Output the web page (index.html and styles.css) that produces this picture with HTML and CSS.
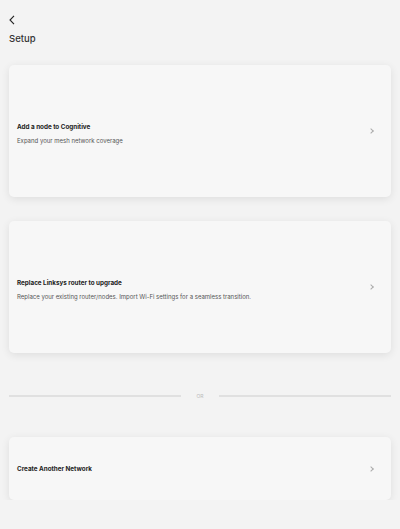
FILE: index.html
```html
<!DOCTYPE html>
<html lang="en">
<head>
    <meta charset="UTF-8">
    <meta name="viewport" content="width=device-width, initial-scale=1.0">
    <title>Setup</title>
    <link rel="stylesheet" href="styles.css">
</head>
<body>

    <div class="header">
        <a href="#" class="back-link">
            <svg width="6" height="10" viewBox="0 0 6 10">
                <path d="M5 0.8 L1 5 L5 9.2" fill="none" stroke="#222" stroke-width="1.1"/>
            </svg>
        </a>
        <h1>Setup</h1>
    </div>

    <div class="option-list">
        <a href="#" class="option-card tall">
            <div class="option-text">
                <h2>Add a node to Cognitive</h2>
                <p>Expand your mesh network coverage</p>
            </div>
            <span class="chevron"></span>
        </a>

        <a href="#" class="option-card tall">
            <div class="option-text">
                <h2>Replace Linksys router to upgrade</h2>
                <p>Replace your existing router/nodes. Import Wi-Fi settings for a seamless transition.</p>
            </div>
            <span class="chevron"></span>
        </a>

        <div class="divider">
            <span class="divider-line"></span>
            <span class="divider-text">OR</span>
            <span class="divider-line"></span>
        </div>

        <a href="#" class="option-card short">
            <div class="option-text">
                <h2>Create Another Network</h2>
            </div>
            <span class="chevron"></span>
        </a>
    </div>

</body>
</html>
```

FILE: styles.css
```css
* {
    margin: 0;
    padding: 0;
    box-sizing: border-box;
    font-family: 'Inter', 'Liberation Sans', Arial, sans-serif;
}

body {
    background: #f3f3f3;
    color: #222;
    padding: 0 9px;
}

.header {
    padding-top: 15px;
}

.back-link {
    display: block;
    width: 6px;
    height: 10px;
}

.back-link svg {
    display: block;
}

.header h1 {
    font-size: 9.5px;
    font-weight: 500;
    color: #333;
    margin-top: 8px;
    line-height: 12px;
}

.option-list {
    margin-top: 20px;
    display: flex;
    flex-direction: column;
}

.option-card {
    display: flex;
    align-items: center;
    justify-content: space-between;
    background: #f7f7f7;
    border-radius: 5px;
    box-shadow: 0 2px 8px rgba(0, 0, 0, 0.09);
    padding: 0 18px 0 8px;
    text-decoration: none;
    color: inherit;
}

.option-card.tall {
    height: 132px;
    margin-bottom: 24px;
    padding-top: 6px;
}

.option-card.tall .chevron {
    margin-bottom: 6px;
}

.option-card.short {
    height: 63px;
    padding-top: 1px;
}

.option-text h2 {
    font-size: 6.3px;
    font-weight: 700;
    color: #222;
    line-height: 8px;
}

.option-text p {
    font-size: 6px;
    color: #555;
    margin-top: 6px;
    line-height: 8px;
}

.chevron {
    width: 4px;
    height: 4px;
    border-top: 1px solid #aaa;
    border-right: 1px solid #aaa;
    transform: rotate(45deg);
}

.divider {
    display: flex;
    align-items: center;
    gap: 10px;
    margin-top: 16px;
    margin-bottom: 38px;
}

.divider-line {
    flex: 1;
    height: 2px;
    background: #e0e0e0;
}

.divider-text {
    font-size: 5px;
    color: #bbb;
    width: 18px;
    text-align: center;
}
```
